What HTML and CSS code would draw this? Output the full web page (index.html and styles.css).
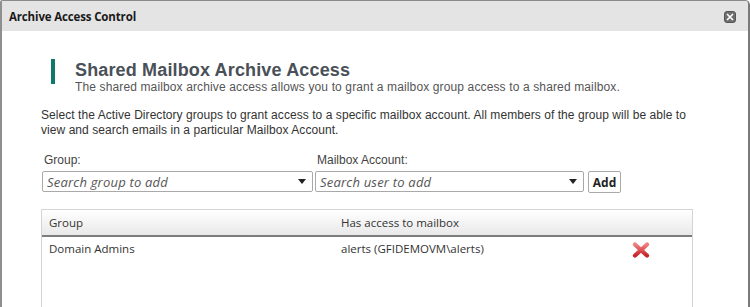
FILE: index.html
```html
<!DOCTYPE html>
<html>
<head>
<meta charset="utf-8">
<link rel="stylesheet" href="styles.css">
</head>
<body>
<div class="dialog">
  <div class="titlebar">
    <span class="title">Archive Access Control</span>
    <span class="close"><svg width="8" height="8" viewBox="0 0 8 8"><path d="M1 1L7 7M7 1L1 7" stroke="#fff" stroke-width="1.6"/></svg></span>
  </div>
  <div class="content">
    <div class="heading">
      <div class="bar"></div>
      <div class="htext">
        <h1>Shared Mailbox Archive Access</h1>
        <p class="sub">The shared mailbox archive access allows you to grant a mailbox group access to a shared mailbox.</p>
      </div>
    </div>
    <p class="intro">Select the Active Directory groups to grant access to a specific mailbox account. All members of the group will be able to view and search emails in a particular Mailbox Account.</p>
    <div class="form">
      <div class="field f1">
        <label>Group:</label>
        <div class="select"><span class="ph">Search group to add</span><span class="arrow"></span></div>
      </div>
      <div class="field f2">
        <label>Mailbox Account:</label>
        <div class="select"><span class="ph">Search user to add</span><span class="arrow"></span></div>
      </div>
      <button class="add">Add</button>
    </div>
    <div class="table">
      <div class="thead">
        <div class="c1">Group</div>
        <div class="c2">Has access to mailbox</div>
      </div>
      <div class="row">
        <div class="c1">Domain Admins</div>
        <div class="c2">alerts (GFIDEMOVM\alerts)</div>
        <div class="c3"><svg width="18" height="16" viewBox="0 0 18 16"><defs><linearGradient id="g" x1="0" y1="0" x2="0" y2="1"><stop offset="0" stop-color="#f08080"/><stop offset="1" stop-color="#c8252a"/></linearGradient></defs><path d="M3 2.5L15 13.5M15 2.5L3 13.5" stroke="url(#g)" stroke-width="4.2" stroke-linecap="round"/></svg></div>
      </div>
    </div>
  </div>
</div>
</body>
</html>
```

FILE: styles.css
```css
html, body { margin: 0; padding: 0; background: #fff; }
body { width: 750px; height: 307px; overflow: hidden; }
.dialog {
  box-sizing: border-box;
  width: 750px;
  height: 307px;
  border: 1px solid #8a8a8a;
  border-left: 2px solid #8f8f8f;
  border-right: 2px solid #7a7a7a;
  border-bottom: none;
  border-top-right-radius: 5px;
  border-top-left-radius: 2px;
  overflow: hidden;
  background: #fff;
}
.titlebar {
  height: 30px;
  background: #e4e4e4;
  display: flex;
  align-items: center;
  justify-content: space-between;
  padding: 0 12px 0 7px;
}
.title {
  font-family: "Open Sans", "DejaVu Sans", sans-serif;
  font-weight: 700;
  font-size: 11.5px;
  color: #1a1a1a;
  letter-spacing: -0.15px;
}
.close {
  width: 12px;
  height: 12px;
  background: #6e6e6e;
  border: 1px solid #555;
  border-radius: 3px;
  display: flex;
  align-items: center;
  justify-content: center;
  box-sizing: border-box;
  margin-top: 2px;
}
.content {
  padding: 0 0 0 39px;
  font-family: "Liberation Sans", Arial, sans-serif;
}
.heading {
  display: flex;
  margin: 28px 0 0 10px;
  height: 25px;
}
.bar {
  width: 4px;
  height: 25px;
  background: #0f7a6c;
  margin-right: 20px;
}
.htext { margin-top: 2px; }
h1 {
  margin: 0;
  font-size: 18px;
  line-height: 18px;
  font-weight: 700;
  color: #4a5058;
  letter-spacing: 0.15px;
}
.sub {
  margin: 1px 0 0;
  font-size: 12px;
  line-height: 14px;
  color: #555;
  letter-spacing: 0.13px;
}
.intro {
  margin: 24px 0 0;
  width: 665px;
  font-size: 12px;
  line-height: 15px;
  color: #333;
  letter-spacing: 0.06px;
}
.form {
  display: flex;
  align-items: flex-end;
  margin-top: 15px;
  padding-left: 1px;
}
.field label {
  display: block;
  font-size: 12px;
  line-height: 14px;
  color: #444;
  margin: 0 0 4px 2px;
}
.select {
  box-sizing: border-box;
  height: 21px;
  border: 1px solid #a9a9a9;
  border-radius: 2px;
  display: flex;
  align-items: center;
  justify-content: space-between;
  padding: 0 6px 0 4px;
}
.f1 .select { width: 271px; }
.f2 { margin-left: 2px; }
.f2 .select { width: 269px; }
.ph {
  font-family: "Open Sans", sans-serif;
  font-style: italic;
  font-size: 13px;
  color: #555;
  letter-spacing: 0.2px;
}
.arrow {
  width: 0; height: 0;
  border-left: 4px solid transparent;
  border-right: 4px solid transparent;
  border-top: 5px solid #222;
}
.add {
  box-sizing: border-box;
  height: 22px;
  width: 33px;
  margin-left: 4px;
  padding: 0;
  border: 1px solid #a9a9a9;
  border-radius: 2px;
  background: #fff;
  font-family: "Open Sans", sans-serif;
  font-weight: 700;
  font-size: 12px;
  color: #222;
  margin-bottom: -1px;
}
.table {
  margin-top: 17px;
  width: 652px;
  box-sizing: border-box;
  border: 1px solid #d4d4d4;
  border-bottom: none;
  height: 100px;
  font-family: "Open Sans", sans-serif;
  font-size: 11.5px;
  color: #333;
}
.thead, .row { display: flex; align-items: center; }
.thead {
  height: 25px;
  background: linear-gradient(#ffffff, #e9e9e9);
  border-bottom: 2px solid #7d7d7d;
}
.row { height: 22px; }
.c1 { width: 299px; padding-left: 7px; box-sizing: border-box; }
.c2 { width: 291px; box-sizing: border-box; }
.c3 { display: flex; align-items: center; padding-top: 3px; }
```
